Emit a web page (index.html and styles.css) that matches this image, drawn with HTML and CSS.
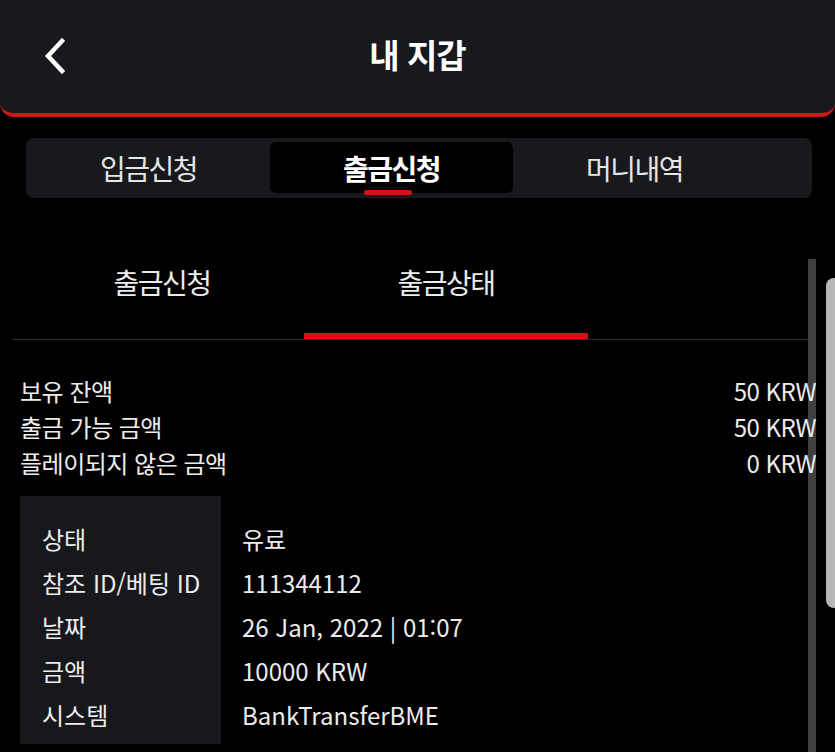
FILE: index.html
```html
<!DOCTYPE html>
<html lang="ko">
<head>
    <meta charset="UTF-8">
    <meta name="viewport" content="width=device-width, initial-scale=1.0">
    <title>내 지갑</title>
    <link rel="stylesheet" href="styles.css">
</head>
<body>
    <header class="header">
        <a href="#" class="nav-back" aria-label="뒤로">
            <svg width="26" height="36" viewBox="0 0 26 36">
                <polyline points="20,3 6,18 20,33" fill="none" stroke="#fff" stroke-width="4.5" stroke-linecap="square"/>
            </svg>
        </a>
        <h1>내 지갑</h1>
    </header>

    <nav class="segment">
        <div class="segment-tab">입금신청</div>
        <div class="segment-tab active">출금신청</div>
        <div class="segment-tab">머니내역</div>
    </nav>

    <main class="panel">
        <div class="scroll-track"></div>

        <div class="sub-tabs">
            <div class="sub-tab">출금신청</div>
            <div class="sub-tab active">출금상태</div>
        </div>

        <div class="balance">
            <div class="balance-row"><span>보유 잔액</span><span>50 KRW</span></div>
            <div class="balance-row"><span>출금 가능 금액</span><span>50 KRW</span></div>
            <div class="balance-row"><span>플레이되지 않은 금액</span><span>0 KRW</span></div>
        </div>

        <table class="detail">
            <tr><th>상태</th><td>유료</td></tr>
            <tr><th>참조 ID/베팅 ID</th><td>111344112</td></tr>
            <tr><th>날짜</th><td>26 Jan, 2022 | 01:07</td></tr>
            <tr><th>금액</th><td>10000 KRW</td></tr>
            <tr><th>시스템</th><td>BankTransferBME</td></tr>
        </table>
    </main>

    <div class="page-thumb"></div>
</body>
</html>
```

FILE: styles.css
```css
* {
    margin: 0;
    padding: 0;
    box-sizing: border-box;
}

body {
    font-family: "Noto Sans CJK KR", "Noto Sans", sans-serif;
    background: #000;
    color: #ececec;
    width: 835px;
    height: 752px;
    overflow: hidden;
    position: relative;
}

.header {
    height: 117px;
    background: #18191d;
    border-bottom: 4px solid #d3141b;
    border-radius: 0 0 14px 14px;
    display: flex;
    align-items: center;
    justify-content: center;
    position: relative;
}

.header h1 {
    font-size: 33px;
    font-weight: 700;
    color: #fff;
    letter-spacing: -1px;
    margin-top: -6px;
}

.nav-back {
    position: absolute;
    left: 42px;
    top: 38px;
    display: block;
    line-height: 0;
}

.segment {
    margin: 21px 23px 0 26px;
    height: 60px;
    background: #18191d;
    border-radius: 8px;
    display: grid;
    grid-template-columns: repeat(3, 243px);
    padding: 4px 0 5px 1px;
}

.segment-tab {
    display: flex;
    align-items: center;
    justify-content: center;
    font-size: 28px;
    letter-spacing: -1.5px;
    color: #e6e6e6;
    position: relative;
}

.segment-tab.active {
    background: #000;
    border-radius: 6px;
    font-weight: 700;
    color: #fff;
}

.segment-tab.active::after {
    content: "";
    position: absolute;
    left: 94px;
    bottom: -2px;
    width: 48px;
    height: 5px;
    border-radius: 3px;
    background: #d3141b;
}

.panel {
    margin-left: 12px;
    width: 804px;
    position: relative;
}

.scroll-track {
    position: absolute;
    right: 0;
    top: 61px;
    width: 8px;
    height: 500px;
    background: #3f3f3f;
}

.sub-tabs {
    display: flex;
    padding: 64px 0 0 8px;
    border-bottom: 1px solid #2d2d39;
}

.sub-tab {
    width: 284px;
    height: 77px;
    text-align: center;
    font-size: 28px;
    letter-spacing: -1.5px;
    line-height: 40px;
    border-bottom: 6px solid transparent;
}

.sub-tab.active {
    border-bottom-color: #e10d12;
}

.balance {
    position: relative;
    margin-top: 33px;
    padding-left: 8px;
}

.balance-row {
    display: flex;
    justify-content: space-between;
    font-size: 24px;
    line-height: 36px;
    letter-spacing: -0.5px;
}

.detail {
    margin: 15px 0 0 8px;
    border-collapse: collapse;
    font-size: 24px;
}

.detail th,
.detail td {
    font-weight: 400;
    text-align: left;
    line-height: 44px;
    white-space: nowrap;
}

.detail th {
    width: 201px;
    background: #17181c;
    padding-left: 22px;
}

.detail td {
    padding-left: 21px;
}

.detail tr:first-child th,
.detail tr:first-child td {
    padding-top: 21px;
}

.detail tr:last-child th,
.detail tr:last-child td {
    padding-bottom: 7px;
}

.page-thumb {
    position: absolute;
    left: 826px;
    top: 278px;
    width: 18px;
    height: 330px;
    border-radius: 8px;
    background: #b8b8b8;
}
```
